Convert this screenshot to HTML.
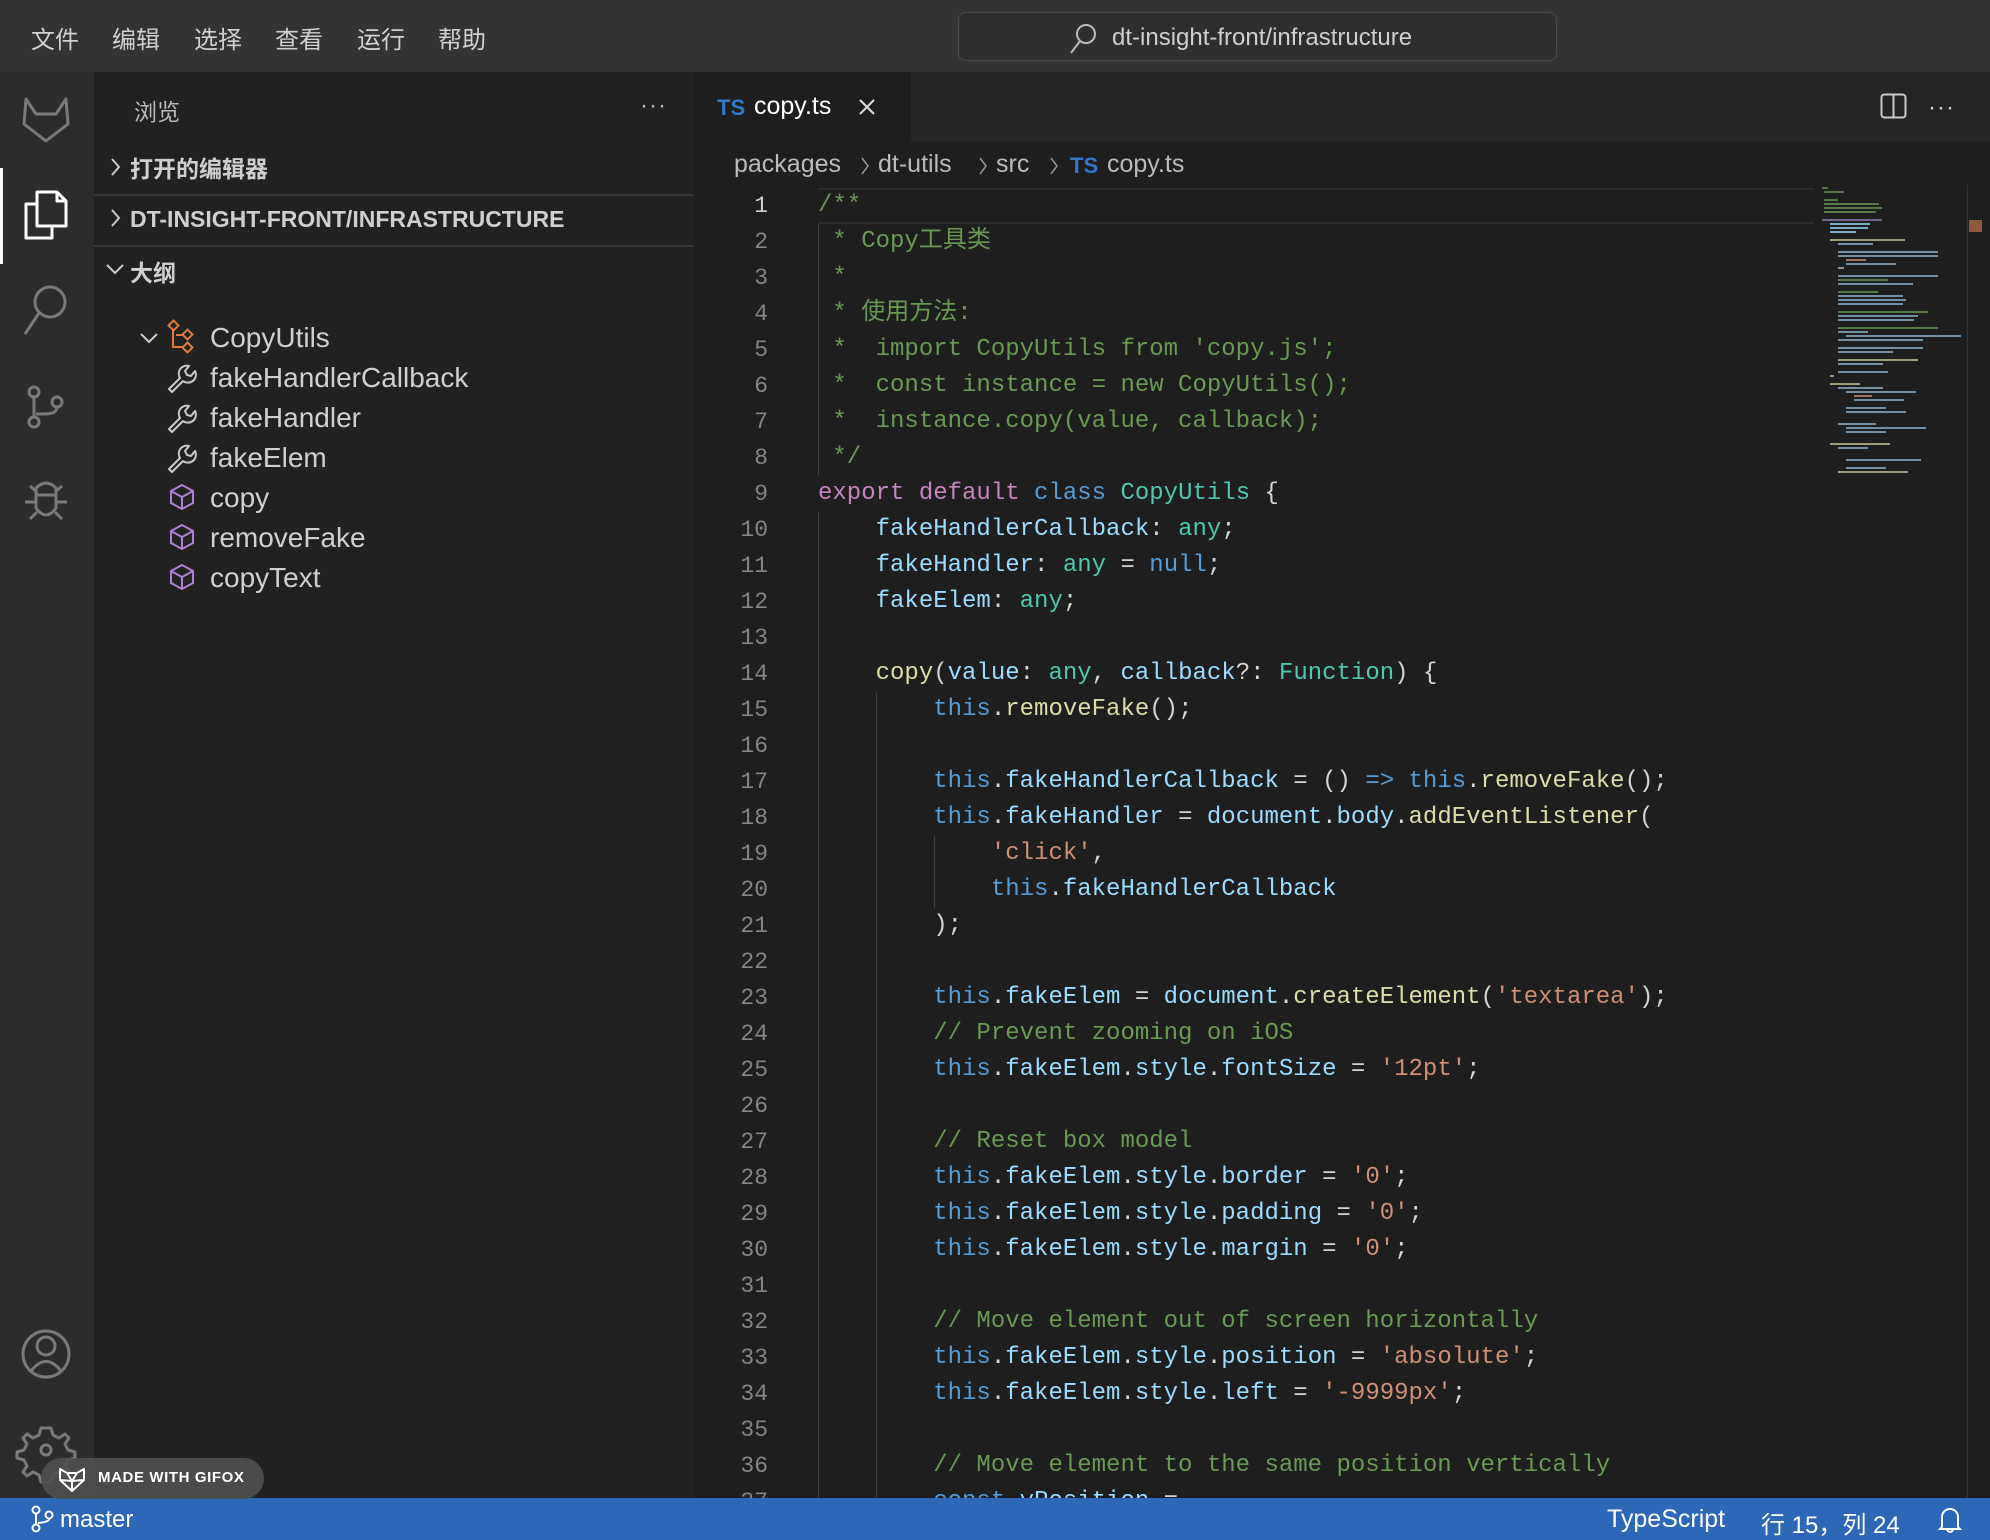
<!DOCTYPE html>
<html><head><meta charset="utf-8">
<style>
*{margin:0;padding:0;box-sizing:border-box}
body{width:1990px;height:1540px;overflow:hidden;background:#1e1e1e;font-family:"Liberation Sans","Noto Sans CJK SC",sans-serif;position:relative;color:#ccc}
.abs{position:absolute}
#title{left:0;top:0;width:1990px;height:72px;background:#333333}
.menu{top:20px;font-size:24px;color:#d0d0d0}
#search{left:958px;top:12px;width:599px;height:49px;border:1.5px solid #4a4a4a;border-radius:8px;background:#2e2e2e}
#act{left:0;top:72px;width:94px;height:1426px;background:#2c2c2c}
#side{left:94px;top:72px;width:600px;height:1426px;background:#212121}
#tabbar{left:694px;top:72px;width:1296px;height:70px;background:#252525}
#tab{left:694px;top:72px;width:217px;height:70px;background:#1e1e1e}
.code{position:absolute;left:818px;height:36px;line-height:36px;font-family:"Liberation Mono","Noto Sans CJK SC",monospace;font-size:24px;white-space:pre;color:#d4d4d4}
.ln{position:absolute;left:700px;width:68px;text-align:right;height:36px;line-height:36px;font-family:"Liberation Mono",monospace;font-size:23px;color:#858585}
.c{color:#6a9955}.k{color:#c586c0}.b{color:#569cd6}.t{color:#4ec9b0}.p{color:#9cdcfe}.f{color:#dcdcaa}.s{color:#ce9178}
.sec{left:104px;font-size:23px;font-weight:bold;color:#cfcfcf}
.item{left:210px;font-size:28px;color:#d0d0d0}
.g{position:absolute;width:1px;background:#404040}
#status{left:0;top:1498px;width:1990px;height:42px;background:#2d68b8;color:#fff;font-size:23px}
.mm{position:absolute;height:2px;opacity:.75}
.bc{position:absolute;top:150px;font-size:25px;color:#bbb}
.chev{position:absolute;top:154px;}
</style></head><body>
<div id="title" class="abs"></div>
<div class="abs menu" style="left:31px">文件</div>
<div class="abs menu" style="left:112px">编辑</div>
<div class="abs menu" style="left:194px">选择</div>
<div class="abs menu" style="left:275px">查看</div>
<div class="abs menu" style="left:357px">运行</div>
<div class="abs menu" style="left:438px">帮助</div>
<div id="search" class="abs"></div>
<svg class="abs" style="left:1066px;top:21px" width="34" height="34" viewBox="0 0 34 34"><circle cx="20" cy="13" r="9" fill="none" stroke="#bbb" stroke-width="2"/><line x1="14" y1="20" x2="5" y2="32" stroke="#bbb" stroke-width="2"/></svg>
<div class="abs" style="left:1112px;top:24px;font-size:24px;color:#cfcfcf">dt-insight-front/infrastructure</div>

<div id="act" class="abs"></div>
<div class="abs" style="left:0;top:168px;width:3px;height:96px;background:#fff"></div>
<svg class="abs" style="left:0;top:72px" width="94" height="1426" viewBox="0 72 94 1426" fill="none" stroke="#7a7a7a" stroke-width="3" stroke-linejoin="round">
<path d="M26 99 L36 114 L56 114 L66 99 L68 124 L46 141 L24 124 Z"/>
<path d="M37 192 H57 L66 201 V226 H37 Z M66 201 H57 V192" stroke="#fff"/>
<path d="M37 204 H26 V238 H52 V226" stroke="#fff"/>
<circle cx="50" cy="302" r="15"/><line x1="39" y1="313" x2="25" y2="334"/>
<circle cx="34" cy="392" r="5"/><circle cx="34" cy="422" r="5"/><circle cx="57" cy="402" r="5"/><path d="M34 397 V417 M57 407 Q57 414 44 414 H36"/>
<path d="M36 488 Q46 478 56 488 V508 Q46 522 36 508 Z M36 495 H56"/><path d="M25 502 H36 M56 502 H67 M30 486 L37 492 M62 486 L55 492 M30 519 L37 512 M62 519 L55 512"/>
<circle cx="46" cy="1354" r="23"/><circle cx="46" cy="1346" r="9"/><path d="M31 1371 Q46 1352 61 1371"/>
<path d="M46 1428 l5 0 l2 7 l6 3 l6 -4 l4 4 l-4 6 l3 6 l7 2 v6 l-7 2 l-3 6 l4 6 l-4 4 l-6 -4 l-6 3 l-2 7 h-10 l-2 -7 l-6 -3 l-6 4 l-4 -4 l4 -6 l-3 -6 l-7 -2 v-6 l7 -2 l3 -6 l-4 -6 l4 -4 l6 4 l6 -3 l2 -7 z"/><circle cx="46" cy="1450" r="5"/>
</svg>

<div id="side" class="abs"></div>
<div class="abs" style="left:134px;top:93px;font-size:23px;color:#bbb">浏览</div>
<div class="abs" style="left:640px;top:92px;font-size:24px;color:#bbb;letter-spacing:1px">···</div>
<div class="abs" style="left:94px;top:194px;width:600px;height:2px;background:#353535"></div>
<div class="abs" style="left:94px;top:245px;width:600px;height:2px;background:#353535"></div>
<svg class="abs" style="left:104px;top:150px" width="30" height="150" viewBox="0 0 30 150" fill="none" stroke="#ccc" stroke-width="2"><path d="M8 9 L15 17 L8 25"/><path d="M8 60 L15 68 L8 76"/><path d="M3 115 L11 123 L19 115"/></svg>
<div class="abs sec" style="left:130px;top:150px">打开的编辑器</div>
<div class="abs sec" style="left:130px;top:206px">DT-INSIGHT-FRONT/INFRASTRUCTURE</div>
<div class="abs sec" style="left:130px;top:254px">大纲</div>
<svg class="abs" style="left:136px;top:318px" width="70" height="280" viewBox="0 0 70 280" fill="none" stroke-width="2">
<path d="M5 16 L13 24 L21 16" stroke="#ccc"/>
<g stroke="#e07b39"><rect x="34" y="4" width="7" height="7" transform="rotate(45 37.5 7.5)"/><rect x="48" y="13" width="7" height="7" transform="rotate(45 51.5 16.5)"/><rect x="48" y="26" width="7" height="7" transform="rotate(45 51.5 29.5)"/><path d="M37 12 V29 H46 M40 17 H46"/></g>
<g id="wr" stroke="#c8c8c8" stroke-linejoin="round">
<path d="M36 74 L33 71 L44 60 A8 8 0 0 1 53 48 L49 53 L51 57 L55 58 L59 53 A8 8 0 0 1 47 63 Z"/>
</g>
<g stroke="#c8c8c8" stroke-linejoin="round" transform="translate(0,40)"><path d="M36 74 L33 71 L44 60 A8 8 0 0 1 53 48 L49 53 L51 57 L55 58 L59 53 A8 8 0 0 1 47 63 Z"/></g>
<g stroke="#c8c8c8" stroke-linejoin="round" transform="translate(0,80)"><path d="M36 74 L33 71 L44 60 A8 8 0 0 1 53 48 L49 53 L51 57 L55 58 L59 53 A8 8 0 0 1 47 63 Z"/></g>
<g stroke="#b180d7"><path d="M46 167 L57 173 V185 L46 191 L35 185 V173 Z M35 173 L46 179 L57 173 M46 179 V191"/></g>
<g stroke="#b180d7" transform="translate(0,40)"><path d="M46 167 L57 173 V185 L46 191 L35 185 V173 Z M35 173 L46 179 L57 173 M46 179 V191"/></g>
<g stroke="#b180d7" transform="translate(0,80)"><path d="M46 167 L57 173 V185 L46 191 L35 185 V173 Z M35 173 L46 179 L57 173 M46 179 V191"/></g>
</svg>
<div class="abs item" style="top:322px">CopyUtils</div>
<div class="abs item" style="top:362px">fakeHandlerCallback</div>
<div class="abs item" style="top:402px">fakeHandler</div>
<div class="abs item" style="top:442px">fakeElem</div>
<div class="abs item" style="top:482px">copy</div>
<div class="abs item" style="top:522px">removeFake</div>
<div class="abs item" style="top:562px">copyText</div>

<div id="tabbar" class="abs"></div>
<div id="tab" class="abs"></div>
<div class="abs" style="left:717px;top:95px;font-size:22px;font-weight:bold;color:#3178c6">TS</div>
<div class="abs" style="left:754px;top:92px;font-size:25px;color:#fff">copy.ts</div>
<svg class="abs" style="left:857px;top:97px" width="20" height="20"><path d="M3 3 L17 17 M17 3 L3 17" stroke="#ddd" stroke-width="2"/></svg>
<svg class="abs" style="left:1880px;top:93px" width="27" height="26"><rect x="1.5" y="1.5" width="24" height="23" rx="3" fill="none" stroke="#ccc" stroke-width="2"/><line x1="13.5" y1="2" x2="13.5" y2="24" stroke="#ccc" stroke-width="2"/></svg>
<div class="abs" style="left:1928px;top:94px;font-size:24px;color:#ccc;letter-spacing:1px">···</div>

<div class="bc" style="left:734px">packages</div>
<svg class="chev" style="left:859px" width="12" height="24"><path d="M3 4 L9 12 L3 20" fill="none" stroke="#999" stroke-width="1.5"/></svg>
<div class="bc" style="left:878px">dt-utils</div>
<svg class="chev" style="left:977px" width="12" height="24"><path d="M3 4 L9 12 L3 20" fill="none" stroke="#999" stroke-width="1.5"/></svg>
<div class="bc" style="left:996px">src</div>
<svg class="chev" style="left:1048px" width="12" height="24"><path d="M3 4 L9 12 L3 20" fill="none" stroke="#999" stroke-width="1.5"/></svg>
<div class="bc" style="left:1070px;top:153px;font-size:22px;font-weight:bold;color:#3178c6">TS</div>
<div class="bc" style="left:1107px">copy.ts</div>

<div class="abs" style="left:0;top:3px;width:1990px;height:1495px;overflow:hidden">
<div class="abs" style="left:818px;top:185px;width:996px;height:36px;border-top:2px solid #2a2a2a;border-bottom:2px solid #2a2a2a"></div>
<div class="g" style="left:818px;top:221px;height:252px"></div>
<div class="g" style="left:818px;top:509px;height:990px"></div>
<div class="g" style="left:876px;top:689px;height:810px"></div>
<div class="g" style="left:934px;top:833px;height:72px"></div>

<div class="ln" style="top:185px;color:#d0d0d0">1</div><div class="code" style="top:185px"><span class="c">/**</span></div>
<div class="ln" style="top:221px">2</div><div class="code" style="top:221px"><span class="c"> * Copy工具类</span></div>
<div class="ln" style="top:257px">3</div><div class="code" style="top:257px"><span class="c"> *</span></div>
<div class="ln" style="top:293px">4</div><div class="code" style="top:293px"><span class="c"> * 使用方法:</span></div>
<div class="ln" style="top:329px">5</div><div class="code" style="top:329px"><span class="c"> *  import CopyUtils from 'copy.js';</span></div>
<div class="ln" style="top:365px">6</div><div class="code" style="top:365px"><span class="c"> *  const instance = new CopyUtils();</span></div>
<div class="ln" style="top:401px">7</div><div class="code" style="top:401px"><span class="c"> *  instance.copy(value, callback);</span></div>
<div class="ln" style="top:437px">8</div><div class="code" style="top:437px"><span class="c"> */</span></div>
<div class="ln" style="top:473px">9</div><div class="code" style="top:473px"><span class="k">export default</span> <span class="b">class</span> <span class="t">CopyUtils</span> {</div>
<div class="ln" style="top:509px">10</div><div class="code" style="top:509px">    <span class="p">fakeHandlerCallback</span>: <span class="t">any</span>;</div>
<div class="ln" style="top:545px">11</div><div class="code" style="top:545px">    <span class="p">fakeHandler</span>: <span class="t">any</span> = <span class="b">null</span>;</div>
<div class="ln" style="top:581px">12</div><div class="code" style="top:581px">    <span class="p">fakeElem</span>: <span class="t">any</span>;</div>
<div class="ln" style="top:617px">13</div>
<div class="ln" style="top:653px">14</div><div class="code" style="top:653px">    <span class="f">copy</span>(<span class="p">value</span>: <span class="t">any</span>, <span class="p">callback</span>?: <span class="t">Function</span>) {</div>
<div class="ln" style="top:689px">15</div><div class="code" style="top:689px">        <span class="b">this</span>.<span class="f">removeFake</span>();</div>
<div class="ln" style="top:725px">16</div>
<div class="ln" style="top:761px">17</div><div class="code" style="top:761px">        <span class="b">this</span>.<span class="p">fakeHandlerCallback</span> = () <span class="b">=&gt;</span> <span class="b">this</span>.<span class="f">removeFake</span>();</div>
<div class="ln" style="top:797px">18</div><div class="code" style="top:797px">        <span class="b">this</span>.<span class="p">fakeHandler</span> = <span class="p">document</span>.<span class="p">body</span>.<span class="f">addEventListener</span>(</div>
<div class="ln" style="top:833px">19</div><div class="code" style="top:833px">            <span class="s">'click'</span>,</div>
<div class="ln" style="top:869px">20</div><div class="code" style="top:869px">            <span class="b">this</span>.<span class="p">fakeHandlerCallback</span></div>
<div class="ln" style="top:905px">21</div><div class="code" style="top:905px">        );</div>
<div class="ln" style="top:941px">22</div>
<div class="ln" style="top:977px">23</div><div class="code" style="top:977px">        <span class="b">this</span>.<span class="p">fakeElem</span> = <span class="p">document</span>.<span class="f">createElement</span>(<span class="s">'textarea'</span>);</div>
<div class="ln" style="top:1013px">24</div><div class="code" style="top:1013px">        <span class="c">// Prevent zooming on iOS</span></div>
<div class="ln" style="top:1049px">25</div><div class="code" style="top:1049px">        <span class="b">this</span>.<span class="p">fakeElem</span>.<span class="p">style</span>.<span class="p">fontSize</span> = <span class="s">'12pt'</span>;</div>
<div class="ln" style="top:1085px">26</div>
<div class="ln" style="top:1121px">27</div><div class="code" style="top:1121px">        <span class="c">// Reset box model</span></div>
<div class="ln" style="top:1157px">28</div><div class="code" style="top:1157px">        <span class="b">this</span>.<span class="p">fakeElem</span>.<span class="p">style</span>.<span class="p">border</span> = <span class="s">'0'</span>;</div>
<div class="ln" style="top:1193px">29</div><div class="code" style="top:1193px">        <span class="b">this</span>.<span class="p">fakeElem</span>.<span class="p">style</span>.<span class="p">padding</span> = <span class="s">'0'</span>;</div>
<div class="ln" style="top:1229px">30</div><div class="code" style="top:1229px">        <span class="b">this</span>.<span class="p">fakeElem</span>.<span class="p">style</span>.<span class="p">margin</span> = <span class="s">'0'</span>;</div>
<div class="ln" style="top:1265px">31</div>
<div class="ln" style="top:1301px">32</div><div class="code" style="top:1301px">        <span class="c">// Move element out of screen horizontally</span></div>
<div class="ln" style="top:1337px">33</div><div class="code" style="top:1337px">        <span class="b">this</span>.<span class="p">fakeElem</span>.<span class="p">style</span>.<span class="p">position</span> = <span class="s">'absolute'</span>;</div>
<div class="ln" style="top:1373px">34</div><div class="code" style="top:1373px">        <span class="b">this</span>.<span class="p">fakeElem</span>.<span class="p">style</span>.<span class="p">left</span> = <span class="s">'-9999px'</span>;</div>
<div class="ln" style="top:1409px">35</div>
<div class="ln" style="top:1445px">36</div><div class="code" style="top:1445px">        <span class="c">// Move element to the same position vertically</span></div>
<div class="ln" style="top:1481px">37</div><div class="code" style="top:1481px">        <span class="b">const</span> <span class="p">yPosition</span> =</div>
</div>

<!-- minimap -->
<div class="abs" style="left:1820px;top:184px;width:146px;height:320px;background:#1e1e1e"></div>
<div class="abs" style="left:1967px;top:185px;width:1px;height:1313px;background:#333"></div>
<div class="abs" style="left:1969px;top:220px;width:13px;height:12px;background:#8a5a3a"></div>
<div class="mm" style="left:1822px;top:187px;width:6px;background:#6a9955"></div>
<div class="mm" style="left:1824px;top:191px;width:20px;background:#6a9955"></div>
<div class="mm" style="left:1824px;top:199px;width:14px;background:#6a9955"></div>
<div class="mm" style="left:1824px;top:203px;width:55px;background:#6a9955"></div>
<div class="mm" style="left:1824px;top:207px;width:58px;background:#6a9955"></div>
<div class="mm" style="left:1824px;top:211px;width:52px;background:#6a9955"></div>
<div class="mm" style="left:1822px;top:219px;width:60px;background:#8f7db0"></div>
<div class="mm" style="left:1830px;top:223px;width:40px;background:#9cdcfe"></div>
<div class="mm" style="left:1830px;top:227px;width:38px;background:#9cdcfe"></div>
<div class="mm" style="left:1830px;top:231px;width:26px;background:#9cdcfe"></div>
<div class="mm" style="left:1830px;top:239px;width:75px;background:#c8c89a"></div>
<div class="mm" style="left:1838px;top:243px;width:35px;background:#8fb5d0"></div>
<div class="mm" style="left:1838px;top:251px;width:100px;background:#8fb5d0"></div>
<div class="mm" style="left:1838px;top:255px;width:100px;background:#8fb5d0"></div>
<div class="mm" style="left:1846px;top:259px;width:20px;background:#ce9178"></div>
<div class="mm" style="left:1846px;top:263px;width:50px;background:#8fb5d0"></div>
<div class="mm" style="left:1838px;top:267px;width:6px;background:#bbb"></div>
<div class="mm" style="left:1838px;top:275px;width:100px;background:#8fb5d0"></div>
<div class="mm" style="left:1838px;top:279px;width:50px;background:#6a9955"></div>
<div class="mm" style="left:1838px;top:283px;width:75px;background:#8fb5d0"></div>
<div class="mm" style="left:1838px;top:291px;width:40px;background:#6a9955"></div>
<div class="mm" style="left:1838px;top:295px;width:65px;background:#8fb5d0"></div>
<div class="mm" style="left:1838px;top:299px;width:68px;background:#8fb5d0"></div>
<div class="mm" style="left:1838px;top:303px;width:65px;background:#8fb5d0"></div>
<div class="mm" style="left:1838px;top:311px;width:90px;background:#6a9955"></div>
<div class="mm" style="left:1838px;top:315px;width:80px;background:#8fb5d0"></div>
<div class="mm" style="left:1838px;top:319px;width:76px;background:#8fb5d0"></div>
<div class="mm" style="left:1838px;top:327px;width:100px;background:#6a9955"></div>
<div class="mm" style="left:1838px;top:331px;width:30px;background:#8fb5d0"></div>
<div class="mm" style="left:1846px;top:335px;width:115px;background:#8fb5d0"></div>
<div class="mm" style="left:1838px;top:339px;width:85px;background:#8fb5d0"></div>
<div class="mm" style="left:1838px;top:347px;width:85px;background:#8fb5d0"></div>
<div class="mm" style="left:1838px;top:351px;width:55px;background:#8fb5d0"></div>
<div class="mm" style="left:1838px;top:359px;width:80px;background:#c8c89a"></div>
<div class="mm" style="left:1838px;top:363px;width:45px;background:#8fb5d0"></div>
<div class="mm" style="left:1838px;top:371px;width:50px;background:#8fb5d0"></div>
<div class="mm" style="left:1830px;top:375px;width:4px;background:#bbb"></div>
<div class="mm" style="left:1830px;top:383px;width:30px;background:#c8c89a"></div>
<div class="mm" style="left:1838px;top:387px;width:45px;background:#8fb5d0"></div>
<div class="mm" style="left:1846px;top:391px;width:70px;background:#8fb5d0"></div>
<div class="mm" style="left:1854px;top:395px;width:18px;background:#ce9178"></div>
<div class="mm" style="left:1854px;top:399px;width:50px;background:#8fb5d0"></div>
<div class="mm" style="left:1846px;top:407px;width:40px;background:#8fb5d0"></div>
<div class="mm" style="left:1846px;top:411px;width:60px;background:#8fb5d0"></div>
<div class="mm" style="left:1838px;top:423px;width:38px;background:#8fb5d0"></div>
<div class="mm" style="left:1846px;top:427px;width:80px;background:#8fb5d0"></div>
<div class="mm" style="left:1846px;top:431px;width:40px;background:#8fb5d0"></div>
<div class="mm" style="left:1830px;top:443px;width:60px;background:#c8c89a"></div>
<div class="mm" style="left:1838px;top:447px;width:30px;background:#8fb5d0"></div>
<div class="mm" style="left:1846px;top:459px;width:75px;background:#8fb5d0"></div>
<div class="mm" style="left:1846px;top:467px;width:40px;background:#8fb5d0"></div>
<div class="mm" style="left:1838px;top:471px;width:70px;background:#c8c89a"></div>

<div id="status" class="abs"></div>
<svg class="abs" style="left:30px;top:1505px" width="24" height="28" viewBox="0 0 24 28" fill="none" stroke="#fff" stroke-width="2"><circle cx="6" cy="5" r="3.5"/><circle cx="6" cy="23" r="3.5"/><circle cx="19" cy="10" r="3.5"/><path d="M6 9 V19 M19 14 Q19 17 8 18"/></svg>
<div class="abs" style="left:60px;top:1506px;font-size:24px;color:#fff">master</div>
<div class="abs" style="left:1607px;top:1505px;font-size:25px;color:#fff">TypeScript</div>
<div class="abs" style="left:1761px;top:1505px;font-size:24px;color:#fff">行 15，列 24</div>
<svg class="abs" style="left:1938px;top:1505px" width="24" height="30" viewBox="0 0 24 30" fill="none" stroke="#fff" stroke-width="2"><path d="M4 22 V12 A8 8 0 0 1 20 12 V22 L22 24 H2 Z M9 25 Q12 29 15 25"/></svg>

<div class="abs" style="left:41px;top:1458px;width:223px;height:41px;border-radius:21px;background:rgba(80,80,80,.9)"></div>
<svg class="abs" style="left:57px;top:1464px" width="30" height="30" viewBox="0 0 30 30" fill="none" stroke="#fff" stroke-width="2" stroke-linejoin="round"><path d="M3 5 L10 9 H20 L27 5 L27 16 L15 27 L3 16 Z M10 9 L15 17 L20 9 M3 16 L15 17 L27 16 M15 17 V27"/></svg>
<div class="abs" style="left:98px;top:1469px;font-size:15px;font-weight:bold;color:#fff;letter-spacing:0.6px">MADE WITH GIFOX</div>
</body></html>
